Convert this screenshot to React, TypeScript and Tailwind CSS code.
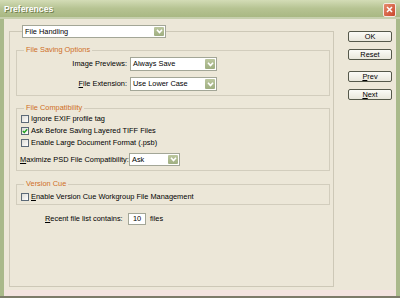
import React from "react";

const Chevron = () => (
  <svg width="7" height="5" viewBox="0 0 7 5">
    <path d="M1 0.8 L3.5 3.6 L6 0.8" stroke="#ffffff" strokeWidth="1.6" fill="none" />
  </svg>
);

function Select({ cls, text }: { cls: string; text: string }) {
  return (
    <div className={`flex shrink-0 items-center border border-[#a3a697] bg-white ${cls}`}>
      <span className="flex-1 whitespace-nowrap pl-[2px] leading-none text-black">{text}</span>
      <div className="mr-[1px] flex h-[calc(100%-2px)] w-[10px] items-center justify-center rounded-[1px] bg-gradient-to-b from-[#bcc79f] to-[#9fae80]">
        <Chevron />
      </div>
    </div>
  );
}

function Check({ checked, children }: { checked?: boolean; children: React.ReactNode }) {
  return (
    <div className="flex h-[12px] items-center gap-[2px] pl-[4px]">
      <div className="flex h-[8px] w-[8px] items-center justify-center border border-[#5c6a78] bg-gradient-to-br from-[#dcdcd6] to-[#ffffff]">
        {checked && (
          <svg width="6" height="6" viewBox="0 0 6 6">
            <path d="M0.8 3 L2.3 4.5 L5.2 1.2" stroke="#21a121" strokeWidth="1.4" fill="none" />
          </svg>
        )}
      </div>
      <span className="whitespace-nowrap leading-none">{children}</span>
    </div>
  );
}

function Btn({ children, cls }: { children: React.ReactNode; cls?: string }) {
  return (
    <div
      className={`flex h-[11px] w-[44px] items-center justify-center rounded-[2px] border border-[#55584a] bg-gradient-to-b from-[#fbfbf7] to-[#e9e7dc] leading-none text-black ${cls ?? ""}`}
    >
      {children}
    </div>
  );
}

export default function App() {
  return (
    <div className="flex h-[298px] w-[400px] flex-col overflow-hidden bg-[#a9b98a] font-['Liberation_Sans',Arial,sans-serif] text-[7.4px] text-black">
      {/* title bar */}
      <div className="flex h-[19px] shrink-0 flex-col">
        <div className="flex h-[17px] items-center justify-between bg-gradient-to-b from-[#d3dcb6] via-[#b6c392] to-[#a9b883] pl-[4px] pr-[4px] pt-[2px]">
          <span className="text-[8.6px] font-bold text-white [text-shadow:1px_1px_0_#6f7d4c]">Preferences</span>
          <div className="flex h-[14px] w-[13px] items-center justify-center rounded-[2px] border border-[#f4e9e3] bg-gradient-to-br from-[#e58a6c] to-[#c9452a]">
            <svg width="7" height="7" viewBox="0 0 7 7">
              <path d="M1 1 L6 6 M6 1 L1 6" stroke="#ffffff" strokeWidth="1.5" />
            </svg>
          </div>
        </div>
        <div className="h-[2px] bg-[#c6cfad]" />
      </div>
      {/* window body */}
      <div className="mx-[4px] flex flex-1 flex-col bg-[#ece7d8]">
        <div className="flex flex-1 pl-[5px] pt-[6px]">
          {/* main group */}
          <fieldset className="h-[262px] w-[325px] border border-[#cdc8b7] pl-[6px] pr-[3px]">
            <legend className="ml-[6px]">
              <Select cls="h-[13px] w-[144px]" text="File Handling" />
            </legend>
            <fieldset className="mt-[7px] border border-[#d2cdbd] pb-[4px] pt-[2px]">
              <legend className="ml-[7px] px-[2px] leading-[10px] text-[#cf6e1f]">File Saving Options</legend>
              <div className="flex h-[14px] items-center">
                <span className="w-[111px] whitespace-nowrap pr-[1px] text-right leading-none">Image Previews:</span>
                <Select cls="ml-[2px] h-[14px] w-[87px]" text="Always Save" />
              </div>
              <div className="mt-[6px] flex h-[14px] items-center">
                <span className="w-[111px] whitespace-nowrap pr-[1px] text-right leading-none">
                  <span className="underline">F</span>ile Extension:
                </span>
                <Select cls="ml-[2px] h-[14px] w-[87px]" text="Use Lower Case" />
              </div>
            </fieldset>
            <fieldset className="mt-[7px] border border-[#d2cdbd] pb-[4px]">
              <legend className="ml-[7px] px-[2px] leading-[10px] text-[#cf6e1f]">File Compatibility</legend>
              <Check>Ignore EXIF profile tag</Check>
              <Check checked>Ask Before Saving Layered TIFF Files</Check>
              <Check>Enable Large Document Format (.psb)</Check>
              <div className="mt-[4px] flex h-[13px] items-center pl-[3px]">
                <span className="w-[109px] shrink-0 whitespace-nowrap leading-none">
                  <span className="underline">M</span>aximize PSD File Compatibility:
                </span>
                <Select cls="h-[13px] w-[51px]" text="Ask" />
              </div>
            </fieldset>
            <fieldset className="mt-[8px] border border-[#d2cdbd] pb-[1px] pt-[2px]">
              <legend className="ml-[7px] px-[2px] leading-[10px] text-[#cf6e1f]">Version Cue</legend>
              <Check>
                <span className="underline">E</span>nable Version Cue Workgroup File Management
              </Check>
            </fieldset>
            <div className="mt-[8px] flex h-[12px] items-center pl-[29px]">
              <span className="w-[82px] shrink-0 whitespace-nowrap leading-none">
                <span className="underline">R</span>ecent file list contains:
              </span>
              <div className="ml-[1px] flex h-[12px] w-[18px] items-center justify-center border border-[#a3a697] bg-white leading-none">
                10
              </div>
              <span className="ml-[4px] leading-none">files</span>
            </div>
          </fieldset>
          {/* buttons */}
          <div className="ml-[14px] flex flex-col pt-[6px]">
            <Btn cls="border-[#3f4236]">OK</Btn>
            <Btn cls="mt-[7px]">Reset</Btn>
            <Btn cls="mt-[11px]">
              <span className="underline">P</span>rev
            </Btn>
            <Btn cls="mt-[7px]">
              <span className="underline">N</span>ext
            </Btn>
          </div>
        </div>
        <div className="h-[6px] shrink-0 bg-[#f3e3df]" />
      </div>
      <div className="h-[2px] shrink-0 bg-[#7c7b69]" />
    </div>
  );
}
